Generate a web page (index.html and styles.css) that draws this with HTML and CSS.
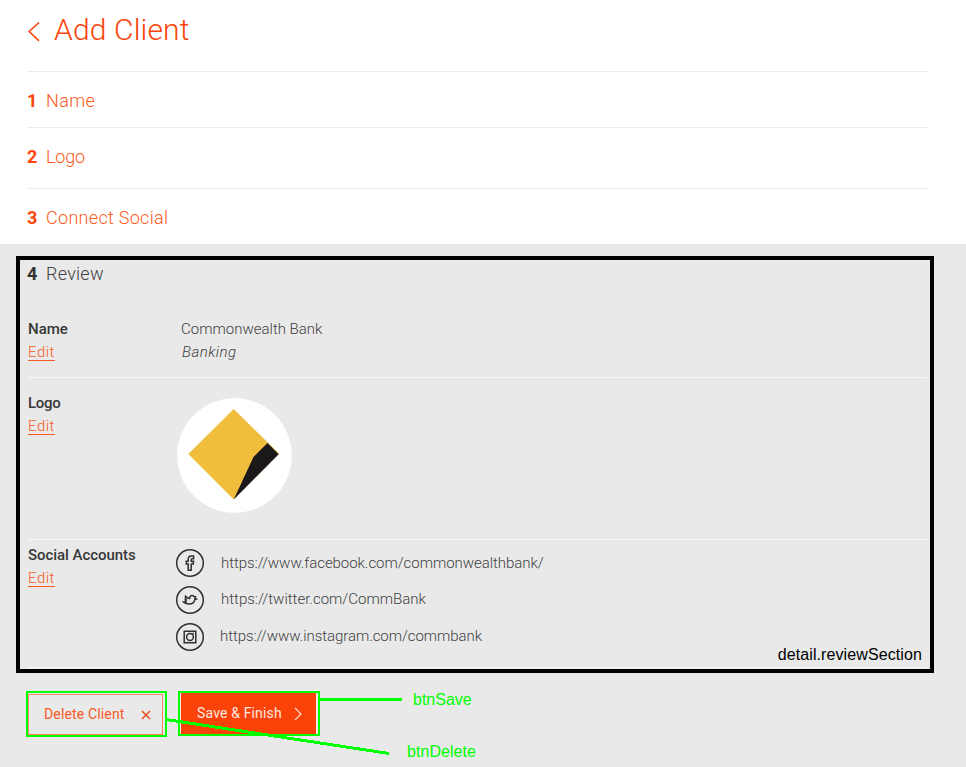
FILE: index.html
```html
<!DOCTYPE html>
<html lang="en">
<head>
<meta charset="utf-8">
<title>Add Client</title>
<link rel="stylesheet" href="styles.css">
</head>
<body>
<header class="header">
  <svg class="back" width="12" height="22" viewBox="0 0 12 22"><path d="M11 1.500 1.200 10.500 11 19.800"/></svg>
  <h1 class="title">Add Client</h1>
</header>
<nav class="steps">
  <a class="step step-name"><b>1</b><span class="t-name">Name</span></a>
  <a class="step step-logo"><b>2</b><span class="t-logo">Logo</span></a>
  <a class="step step-social"><b>3</b><span class="t-social">Connect Social</span></a>
</nav>
<main class="panel">
  <section class="review">
    <h2 class="step-current"><b>4</b><span class="t-review">Review</span></h2>
    <div class="row row-name">
      <div class="label"><strong class="l-name">Name</strong><a class="edit">Edit</a></div>
      <div class="value"><span class="bank">Commonwealth Bank</span><em class="industry">Banking</em></div>
    </div>
    <div class="row row-logo">
      <div class="label"><strong class="l-logo">Logo</strong><a class="edit">Edit</a></div>
      <svg class="logo" width="116" height="116" viewBox="0 0 116 116">
        <circle cx="58.500" cy="58.500" r="57.300" fill="#fff"/>
        <path d="M57.700 12 103 56.500 57.700 102.500 12.300 57Z" fill="#f0be3c"/>
        <path d="M91.500 46 102.700 57.200 57.700 102.500 77.500 60Z" fill="#1b181a"/>
      </svg>
    </div>
    <div class="row row-accounts">
      <div class="label"><strong class="l-accounts">Social Accounts</strong><a class="edit">Edit</a></div>
      <ul class="accounts">
        <li>
          <svg class="icon" width="30" height="30" viewBox="0 0 30 30"><circle cx="15" cy="15" r="13.300"/><path d="M13.200 22.300V16H11.300V13.200H13.200V11.500C13.200 9.100 14.400 8 16.400 8H18.600V10.800H17.300C16.500 10.800 16.200 11.200 16.200 12V13.200H18.600L18.200 16H16.200V22.300Z"/></svg>
          <span class="u-facebook">https://www.facebook.com/commonwealthbank/</span>
        </li>
        <li>
          <svg class="icon" width="30" height="30" viewBox="0 0 30 30"><circle cx="15" cy="15" r="13.300"/><path d="M10.500 11.300C11.700 12.800 13 13.500 14.700 13.400C14.600 11.700 15.600 10.600 17.100 10.600C17.900 10.600 18.500 11 18.900 11.500L20.500 11.700L19.900 13L21.500 14.100L19.800 14.600C19.300 17.300 17.500 19 14.400 19C12 19 9.700 18.500 8.400 16.900L11.600 16.900C10.700 16.500 10.200 15.700 10.200 14.800L11.200 14.700C10.300 13.700 10.100 12.500 10.500 11.300Z"/></svg>
          <span class="u-twitter">https://twitter.com/CommBank</span>
        </li>
        <li>
          <svg class="icon" width="30" height="30" viewBox="0 0 30 30"><circle cx="15" cy="15" r="13.300"/><path d="M9.200 9.200H20.800V20.800H9.200Z"/><circle cx="15" cy="15" r="3.400"/><path d="M17.500 11.500H19"/></svg>
          <span class="u-instagram">https://www.instagram.com/commbank</span>
        </li>
      </ul>
    </div>
    <span class="note note-section">detail.reviewSection</span>
  </section>
  <div class="actions">
    <div class="outline outline-delete">
      <button class="btn btn-delete"><span class="b-delete">Delete Client</span><svg width="10" height="10" viewBox="0 0 10 10"><path d="M1 1 9 9M9 1 1 9"/></svg></button>
    </div>
    <div class="outline outline-save">
      <button class="btn btn-save"><span class="b-save">Save &amp; Finish</span><svg width="8" height="14" viewBox="0 0 8 14"><path d="M1 1 7 7 1 13"/></svg></button>
    </div>
    <svg class="connectors" width="240" height="66" viewBox="0 0 240 66"><path d="M154 8.500H236M0 28.500 223 62.500"/></svg>
    <span class="note note-save">btnSave</span>
    <span class="note note-delete">btnDelete</span>
  </div>
</main>
</body>
</html>
```
FILE: styles.css
```css
* { box-sizing: border-box; }
body {
  margin: 0;
  width: 966px;
  height: 767px;
  overflow: hidden;
  background: #fff;
  color: #414141;
  font-family: Roboto, "Liberation Sans", sans-serif;
  font-size: 15px;
  font-weight: 300;
}
.header { display: flex; align-items: flex-start; height: 71px; padding: 0 28px; }
.back { margin-top: 21px; fill: none; stroke: #fb4509; stroke-width: 1.6; }
.title { margin: 10px 0 0 14px; color: #fb4509; font-size: 30px; line-height: 40px; font-weight: 300; letter-spacing: 0.15px; white-space: nowrap; }
.steps { display: flex; flex-direction: column; height: 173px; margin: 0 38px 0 28px; }
.step { display: flex; align-items: center; border-top: 1px solid #ececec; color: #fb5a22; font-size: 18px; line-height: 24px; }
.step b { width: 18px; color: #fb4509; font-weight: 700; margin-left: -1px; margin-right: 1px; }
.step-name { height: 56px; padding-top: 2px; }
.step-logo { height: 61px; padding-bottom: 2px; }
.step-social { height: 56px; padding-top: 2px; }
.t-name { letter-spacing: 0.4px; }
.t-logo { letter-spacing: -0.2px; }
.t-social { letter-spacing: 0.3px; }
.t-review { letter-spacing: 0.25px; }
.panel { height: 523px; padding: 11px 32px 0 16px; background: #e9e9e9; border-top: 1px solid #e4e4e4; }
.review { position: relative; height: 417px; border: 4px solid #000; padding: 2px 3px 0 8px; }
.step-current { display: flex; height: 52px; margin: 0; font-size: 18px; line-height: 24px; font-weight: 300; }
.step-current b { width: 18px; color: #333; font-weight: 700; margin-left: -1px; margin-right: 1px; }
.row { display: flex; margin-bottom: 1px; border-bottom: 1px solid #f8f8f8; }
.row-name { height: 64px; padding-top: 4px; }
.row-logo { height: 161px; padding-top: 13px; }
.row-accounts { height: 127px; padding-top: 3px; }
.label { display: flex; flex-direction: column; align-items: flex-start; width: 153px; line-height: 23px; }
.label strong { color: #383838; font-weight: 500; }
.l-logo { letter-spacing: -0.3px; }
.l-accounts { letter-spacing: -0.05px; }
.edit { color: #fb5a22; letter-spacing: 0.5px; text-decoration: underline; text-underline-offset: 3px; text-decoration-thickness: 1px; }
.value { display: flex; flex-direction: column; line-height: 23px; }
.industry { margin-left: 1px; letter-spacing: 0.5px; }
.logo { margin: 5px 0 0 -5px; }
.accounts { margin: 4px 0 0 -6px; padding: 0; list-style: none; }
.accounts li { display: flex; align-items: center; height: 37px; gap: 15px; padding-bottom: 7px; }
.u-facebook { margin-left: 1px; letter-spacing: -0.05px; }
.u-twitter { margin: 0 0 2px 1px; }
.u-instagram { margin-bottom: 2px; letter-spacing: -0.06px; }
.icon { fill: none; stroke: #303030; stroke-width: 1.500; flex: none; }
.note { position: absolute; font: 16px/20px "Liberation Sans", Arial, sans-serif; white-space: nowrap; }
.note-section { right: 8px; bottom: 4px; color: #000; letter-spacing: 0.1px; }
.actions { position: relative; display: flex; gap: 11px; margin: 18px 0 0 10px; }
.outline { border: 2px solid #0f0; }
.outline-delete { width: 141px; height: 46px; padding: 1px 2px 0 0; }
.outline-save { width: 142px; height: 45px; padding: 0 2px 0 1px; background: #f2e9e5; }
.btn { display: flex; align-items: center; width: 100%; margin: 0; border: 0; border-radius: 0; font: 400 14px/20px Roboto, sans-serif; white-space: nowrap; }
.btn svg { flex: none; margin-left: auto; fill: none; }
.btn-delete { height: 41px; padding: 0 11px 2px 15px; border: 1px solid #f4875f; background: transparent; color: #f65a26; }
.b-delete { letter-spacing: 0.15px; }
.btn-delete svg { margin-top: 2px; stroke: #ef4c1b; stroke-width: 1.500; }
.btn-save { height: 41px; padding: 0 14px 2px 16px; background: #fb4208; color: #ffe9e0; }
.b-save { letter-spacing: 0.15px; }
.btn-save svg { margin-top: 3px; stroke: #ffd5c4; stroke-width: 1.300; }
.connectors { position: absolute; left: 140px; top: 0; overflow: visible; fill: none; stroke: #0f0; stroke-width: 3; shape-rendering: crispEdges; }
.note-save { left: 387px; top: -1px; color: #0f0; }
.note-delete { left: 381px; top: 51px; color: #0f0; letter-spacing: 0.05px; }
```
